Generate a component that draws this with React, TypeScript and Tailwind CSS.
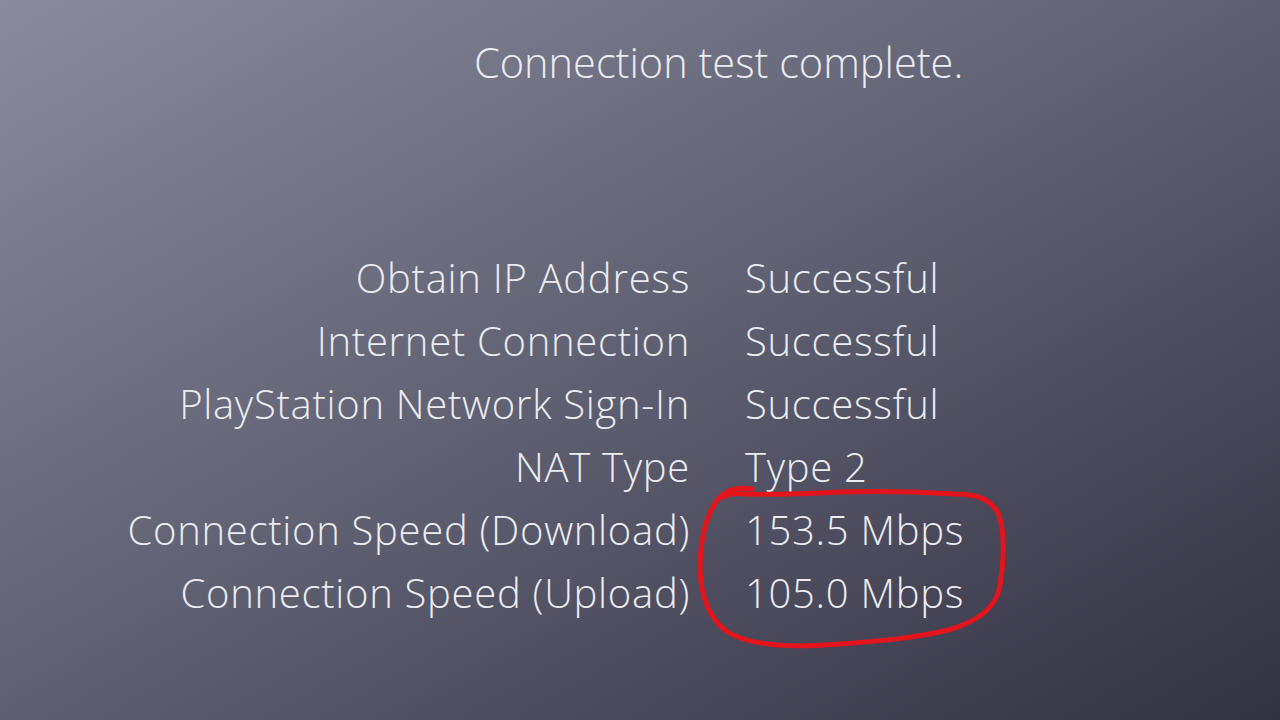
const rows: [string, string][] = [
  ['Obtain IP Address', 'Successful'],
  ['Internet Connection', 'Successful'],
  ['PlayStation Network Sign-In', 'Successful'],
  ['NAT Type', 'Type 2'],
  ['Connection Speed (Download)', '153.5 Mbps'],
  ['Connection Speed (Upload)', '105.0 Mbps'],
];

const RedCircle = () => (
  <svg
    className="pointer-events-none absolute inset-0"
    width="1280"
    height="720"
    viewBox="0 0 1280 720"
    fill="none"
  >
    <path
      d="M752 489 C735 486 722 491 714 505 C704 522 700 545 700 570 C701 596 708 617 726 631 C748 646 790 648 840 644 C880 641 915 638 948 630 C980 621 997 606 1000 585 C1004 560 1005 535 999 515 C992 500 978 494 955 494 C920 492 880 491 840 492 C800 494 770 495 745 494 C735 493 728 494 724 497"
      stroke="#e3141b"
      strokeWidth="5"
      strokeLinecap="round"
      strokeLinejoin="round"
    />
  </svg>
);

export default function App() {
  return (
    <div className="relative h-[720px] w-[1280px] overflow-hidden bg-gradient-to-br from-[#8a8b9c] via-[#5e5f71] to-[#333243] font-['Open_Sans',sans-serif] font-light text-[#ececf1]">
      <div className="flex flex-col">
        <h1 className="pl-[474px] pt-[32px] text-[41.5px] leading-[60px] font-light">
          Connection test complete.
        </h1>
        <div className="mt-[154px] grid grid-cols-[690px_auto] gap-x-[55px] text-[40px] leading-[63px] tracking-[0.7px]">
          {rows.map(([label, value]) => (
            <div key={label} className="contents">
              <div className="text-right">{label}</div>
              <div>{value}</div>
            </div>
          ))}
        </div>
      </div>
      <RedCircle />
    </div>
  );
}
